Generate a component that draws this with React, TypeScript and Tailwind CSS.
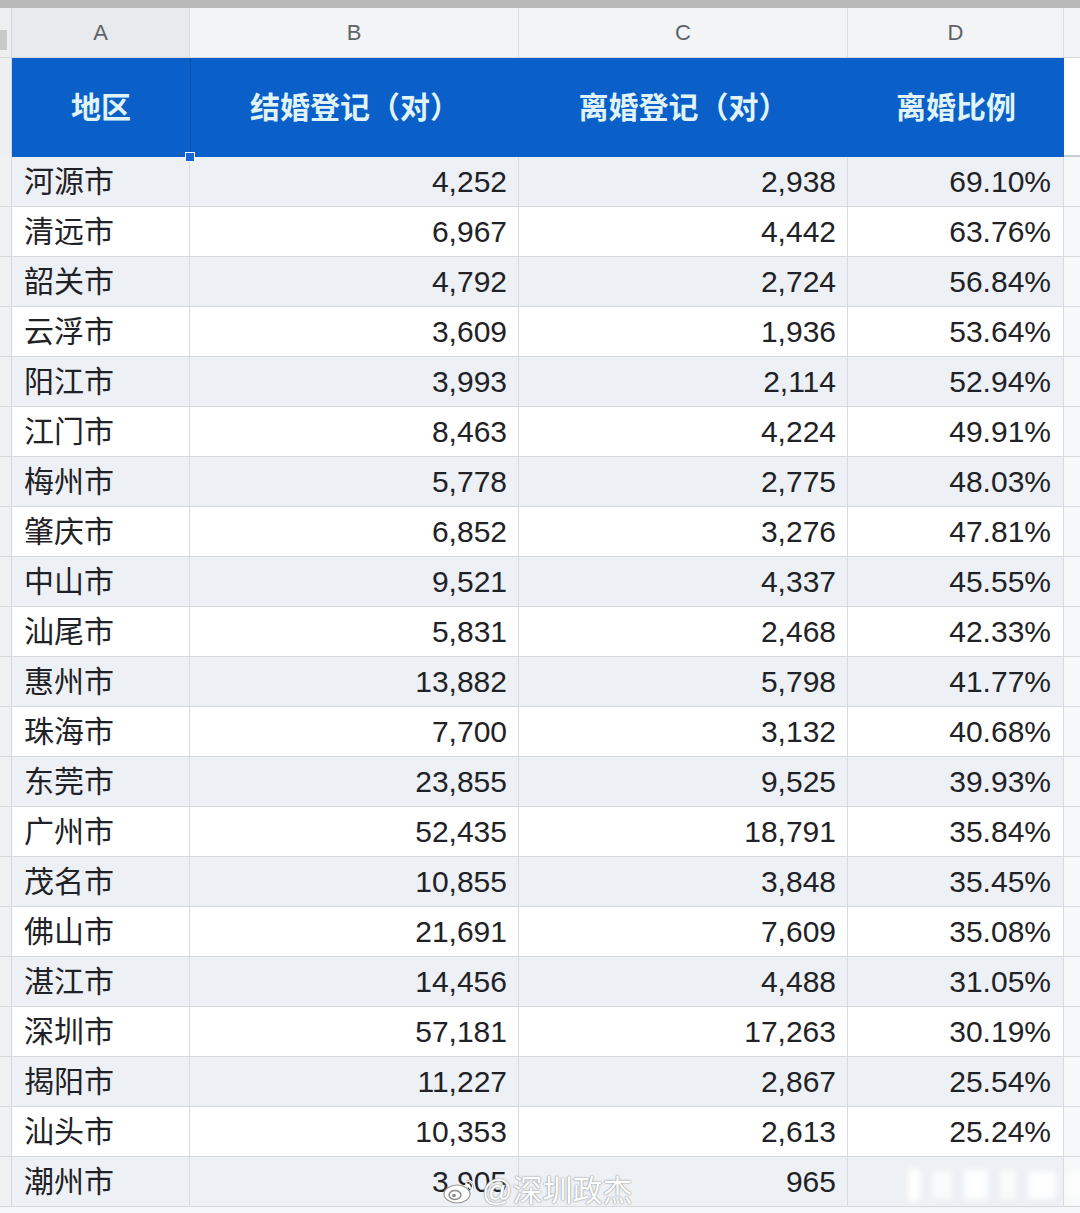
import React from 'react';

type Row = { city: string; marry: string; divorce: string; ratio: string };

const ROWS: Row[] = [
  { city: '河源市', marry: '4,252', divorce: '2,938', ratio: '69.10%' },
  { city: '清远市', marry: '6,967', divorce: '4,442', ratio: '63.76%' },
  { city: '韶关市', marry: '4,792', divorce: '2,724', ratio: '56.84%' },
  { city: '云浮市', marry: '3,609', divorce: '1,936', ratio: '53.64%' },
  { city: '阳江市', marry: '3,993', divorce: '2,114', ratio: '52.94%' },
  { city: '江门市', marry: '8,463', divorce: '4,224', ratio: '49.91%' },
  { city: '梅州市', marry: '5,778', divorce: '2,775', ratio: '48.03%' },
  { city: '肇庆市', marry: '6,852', divorce: '3,276', ratio: '47.81%' },
  { city: '中山市', marry: '9,521', divorce: '4,337', ratio: '45.55%' },
  { city: '汕尾市', marry: '5,831', divorce: '2,468', ratio: '42.33%' },
  { city: '惠州市', marry: '13,882', divorce: '5,798', ratio: '41.77%' },
  { city: '珠海市', marry: '7,700', divorce: '3,132', ratio: '40.68%' },
  { city: '东莞市', marry: '23,855', divorce: '9,525', ratio: '39.93%' },
  { city: '广州市', marry: '52,435', divorce: '18,791', ratio: '35.84%' },
  { city: '茂名市', marry: '10,855', divorce: '3,848', ratio: '35.45%' },
  { city: '佛山市', marry: '21,691', divorce: '7,609', ratio: '35.08%' },
  { city: '湛江市', marry: '14,456', divorce: '4,488', ratio: '31.05%' },
  { city: '深圳市', marry: '57,181', divorce: '17,263', ratio: '30.19%' },
  { city: '揭阳市', marry: '11,227', divorce: '2,867', ratio: '25.54%' },
  { city: '汕头市', marry: '10,353', divorce: '2,613', ratio: '25.24%' },
  { city: '潮州市', marry: '3,905', divorce: '965', ratio: '' },
];

const LETTERS = [
  { key: 'A', w: 'w-[178px]' },
  { key: 'B', w: 'w-[329px]' },
  { key: 'C', w: 'w-[329px]' },
  { key: 'D', w: 'w-[216px]' },
];

function WeiboMark() {
  return (
    <svg width="36" height="30" viewBox="0 0 36 30">
      <ellipse cx="15" cy="18" rx="13" ry="9" fill="#ffffff" stroke="#9a9a9a" strokeWidth="1.2" />
      <ellipse cx="13" cy="19" rx="6" ry="4.5" fill="none" stroke="#8a8a8a" strokeWidth="1.4" />
      <circle cx="12" cy="19.5" r="1.8" fill="#8a8a8a" />
      <path d="M24 4 Q32 5 32 13" fill="none" stroke="#ffffff" strokeWidth="2.4" strokeLinecap="round" />
      <path d="M24 4 Q32 5 32 13" fill="none" stroke="#9a9a9a" strokeWidth="0.8" strokeLinecap="round" />
      <path d="M24 8 Q28 9 28 12" fill="none" stroke="#ffffff" strokeWidth="2" strokeLinecap="round" />
    </svg>
  );
}

export default function App() {
  return (
    <div className="relative h-[1213px] w-[1080px] overflow-hidden bg-[#f5f6f8] font-['Liberation_Sans','Noto_Sans_CJK_SC',sans-serif] text-[#1f2226]">
      {/* top bar */}
      <div className="h-2 bg-[#b9b9b9]" />

      {/* column letters */}
      <div className="flex h-[50px] border-b border-[#d6d8db] bg-[#f3f4f6]">
        <div className="relative w-3 border-r border-[#d3d5d8] bg-[#eeeff1]">
          <div className="absolute left-0 top-[22px] h-[20px] w-[7px] bg-[#c9c9c9]" />
        </div>
        {LETTERS.map((l, i) => (
          <div
            key={l.key}
            className={`${l.w} flex items-center justify-center border-r border-[#dcdee1] text-[22px] font-light text-[#5f6368] ${
              i === 0 ? 'bg-[#e8eaee]' : ''
            }`}
          >
            {l.key}
          </div>
        ))}
        <div className="flex-1" />
      </div>

      {/* blue header */}
      <div className="flex h-[99px]">
        <div className="w-3 border-r border-[#d3d5d8] bg-[#eeeff1]" />
        <div className="relative flex w-[178px] items-center justify-center bg-[#0a5fc8] text-[30px] font-bold text-[#dff3f8]">
          地区
          <div className="absolute -bottom-[5px] -right-[5px] z-10 h-[10px] w-[10px] border border-white bg-[#1565d8]" />
        </div>
        <div className="flex w-[329px] items-center justify-center border-l border-[#0852b0] bg-[#0a5fc8] text-[30px] font-bold text-[#dff3f8]">
          结婚登记（对）
        </div>
        <div className="flex w-[329px] items-center justify-center bg-[#0a5fc8] text-[30px] font-bold text-[#dff3f8]">
          离婚登记（对）
        </div>
        <div className="flex w-[216px] items-center justify-center bg-[#0a5fc8] text-[30px] font-bold text-[#dff3f8]">
          离婚比例
        </div>
        <div className="flex-1 border-b-2 border-[#c9ccd0] bg-white" />
      </div>

      {/* data rows */}
      {ROWS.map((r, idx) => (
        <div
          key={r.city}
          className={`flex h-[50px] border-b border-[#d5d8dc] text-[30px] ${idx % 2 === 0 ? 'bg-[#edf0f4]' : 'bg-white'}`}
        >
          <div className="w-3 border-r border-[#d3d5d8] bg-[#f0f1f3]" />
          <div className="flex w-[178px] items-center border-r border-[#d8dbdf] pl-3">{r.city}</div>
          <div className="flex w-[329px] items-center justify-end border-r border-[#d8dbdf] pr-[11px]">{r.marry}</div>
          <div className="flex w-[329px] items-center justify-end border-r border-[#d8dbdf] pr-[11px]">{r.divorce}</div>
          <div className="flex w-[216px] items-center justify-end border-r border-[#d8dbdf] pr-3">{r.ratio}</div>
          <div className="flex-1 bg-[#f7f8f9]" />
        </div>
      ))}

      {/* watermark */}
      <div className="absolute left-[442px] top-[1168px] flex items-center gap-1">
        <WeiboMark />
        <span className="text-[30px] text-white [text-shadow:0_0_2px_#8d9196,0_0_1px_#8d9196]">@深圳政杰</span>
      </div>
      <div className="absolute left-[908px] top-[1168px] flex h-[34px] items-center gap-[12px] blur-[3px]">
        <div className="h-[32px] w-[12px] bg-white" />
        <div className="h-[28px] w-[20px] bg-white/70" />
        <div className="h-[30px] w-[24px] bg-white/90" />
        <div className="h-[30px] w-[16px] bg-white/70" />
        <div className="h-[28px] w-[28px] bg-white/90" />
        <div className="h-[28px] w-[22px] bg-white/70" />
      </div>
    </div>
  );
}
